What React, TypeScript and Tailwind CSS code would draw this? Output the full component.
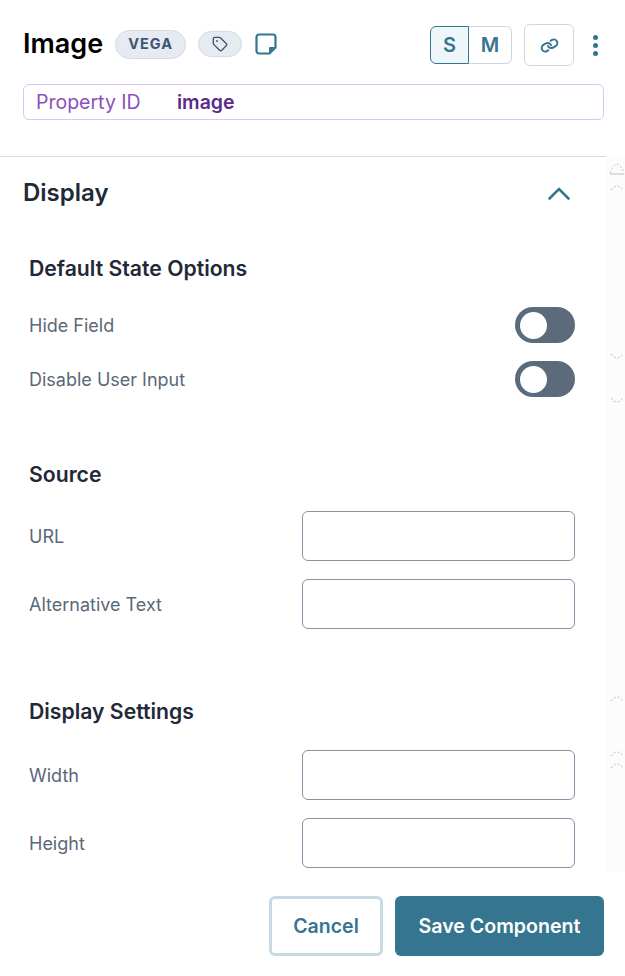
import { Link, Tag } from "lucide-react";

function Toggle() {
  return (
    <div className="w-[60px] h-9 rounded-full bg-[#5c6b7c] flex items-center pl-[5px]">
      <div className="w-[27px] h-[27px] rounded-full bg-white" />
    </div>
  );
}

function ToggleRow({ label }: { label: string }) {
  return (
    <div className="flex items-center justify-between h-9">
      <span className="text-[18px] text-[#5b6878]">{label}</span>
      <Toggle />
    </div>
  );
}

function InputRow({ label }: { label: string }) {
  return (
    <div className="flex items-center justify-between h-[50px]">
      <span className="text-[18px] text-[#5b6878]">{label}</span>
      <input className="w-[273px] h-[50px] rounded-md border border-[#8593a5] bg-white" />
    </div>
  );
}

function Arc({ top, down }: { top: number; down?: boolean }) {
  return (
    <svg
      className="absolute left-[4px]"
      style={{ top }}
      width="14"
      height="8"
      viewBox="0 0 14 8"
      fill="none"
      stroke="#b8b8b8"
      strokeDasharray="2 2"
    >
      <path d={down ? "M1 1 Q7 9 13 1" : "M1 7 Q7 -1 13 7"} />
    </svg>
  );
}

export default function App() {
  return (
    <div className="relative w-[625px] h-[976px] overflow-hidden bg-white font-['Inter',sans-serif] text-[#1f2937]">
      {/* header */}
      <div className="h-[157px] px-[23px] pt-[25px] border-b border-[#cfdde6] w-[606px]">
        <div className="flex items-center h-10 w-[581px]">
          <h1 className="-mt-[2px] text-[27px] leading-10 font-semibold text-black">Image</h1>
          <span className="ml-3 -mt-[2px] h-[29px] w-[71px] flex items-center justify-center rounded-full bg-[#e6ebf2] border border-[#d3dbe5] text-[14.500px] font-bold tracking-[1px] text-[#3f5573]">
            VEGA
          </span>
          <span className="ml-3 -mt-[2px] h-[26px] w-11 flex items-center justify-center rounded-full bg-[#e6ebf2] border border-[#d3dbe5]">
            <Tag size={16} className="text-[#3f5573]" />
          </span>
          <svg className="ml-[13px] -mt-[2px]" width="22" height="22" viewBox="0 0 22 22" fill="none">
            <path
              d="M4 1.500h14a2.500 2.500 0 0 1 2.500 2.500v10.500l-6 6H4A2.500 2.500 0 0 1 1.500 18V4A2.500 2.500 0 0 1 4 1.500Z"
              stroke="#35758f"
              strokeWidth="2.200"
            />
            <path d="M20 14h-5a1 1 0 0 0-1 1v5Z" fill="#35758f" />
          </svg>
          <div className="ml-auto flex items-center">
            <div className="flex h-[38px] w-[82px] text-[20px] font-semibold text-[#35758f]">
              <span className="w-[39px] flex items-center justify-center rounded-l-md bg-[#eff6fa] border border-[#35758f]">S</span>
              <span className="flex-1 flex items-center justify-center rounded-r-md border border-l-0 border-[#c7dae4]">M</span>
            </div>
            <span className="ml-3 w-[50px] h-[42px] flex items-center justify-center rounded-md border border-[#c7dae4]">
              <Link size={17} strokeWidth={2.800} className="text-[#35758f] rotate-[15deg]" />
            </span>
            <span className="ml-[19px] mr-[6px] flex flex-col gap-[3px]">
              <span className="w-[5px] h-[5px] rounded-full bg-[#35758f]" />
              <span className="w-[5px] h-[5px] rounded-full bg-[#35758f]" />
              <span className="w-[5px] h-[5px] rounded-full bg-[#35758f]" />
            </span>
          </div>
        </div>
        <div className="mt-[19px] w-[581px] h-9 flex items-center rounded-md border border-[#e2c4f0] px-3 pt-[2px] text-[19.500px]">
          <span className="w-[141px] text-[#8c50bd]">Property ID</span>
          <span className="font-semibold text-[#5b2a8c]">image</span>
        </div>
      </div>

      {/* display section */}
      <div className="px-[23px] w-[604px]">
        <div className="flex items-center justify-between h-[72px]">
          <h2 className="text-[24px] font-semibold text-[#1f2937]">Display</h2>
          <svg className="mr-[11px]" width="22" height="13" viewBox="0 0 22 13" fill="none" stroke="#35758f" strokeWidth="2.600" strokeLinecap="round">
            <path d="M1.500 11.500 11 2l9.500 9.500" />
          </svg>
        </div>
        <div className="px-[6px]">
          <h3 className="mt-[25px] text-[21.200px] leading-7 font-semibold">Default State Options</h3>
          <div className="mt-[25px] flex flex-col gap-[18px]">
            <ToggleRow label="Hide Field" />
            <ToggleRow label="Disable User Input" />
          </div>
          <h3 className="mt-[63px] text-[21.200px] leading-7 font-semibold">Source</h3>
          <div className="mt-[23px] flex flex-col gap-[18px]">
            <InputRow label="URL" />
            <InputRow label="Alternative Text" />
          </div>
          <h3 className="mt-[68px] text-[21.200px] leading-7 font-semibold">Display Settings</h3>
          <div className="mt-[25px] flex flex-col gap-[18px]">
            <InputRow label="Width" />
            <InputRow label="Height" />
          </div>
        </div>
      </div>

      {/* faint scroll rail */}
      <div className="absolute left-[606px] top-[157px] w-[19px] h-[715px] bg-[#fcfcfc]">
        <svg className="absolute left-[3px] top-[6px]" width="16" height="12" viewBox="0 0 16 12" fill="none" stroke="#bdbdbd">
          <path d="M1 10.500 Q4 2 8 1 Q12 2 15 10.500" strokeDasharray="2 2" />
          <path d="M1 11h14" />
        </svg>
        <Arc top={26} />
        <Arc top={196} down />
        <Arc top={240} down />
        <Arc top={537} />
        <Arc top={592} />
        <Arc top={604} />
      </div>

      {/* footer */}
      <div className="absolute left-0 right-0 top-[872px] h-[104px] bg-white flex justify-end gap-3 pr-[21px] pt-6">
        <button className="w-[114px] h-[60px] pt-[2px] rounded-md border-[3px] border-[#c7dae4] bg-white text-[19.500px] font-semibold text-[#35758f]">
          Cancel
        </button>
        <button className="w-[209px] h-[60px] pt-[2px] rounded-md bg-[#35758f] text-[19.600px] font-semibold text-white">
          Save Component
        </button>
      </div>
    </div>
  );
}
